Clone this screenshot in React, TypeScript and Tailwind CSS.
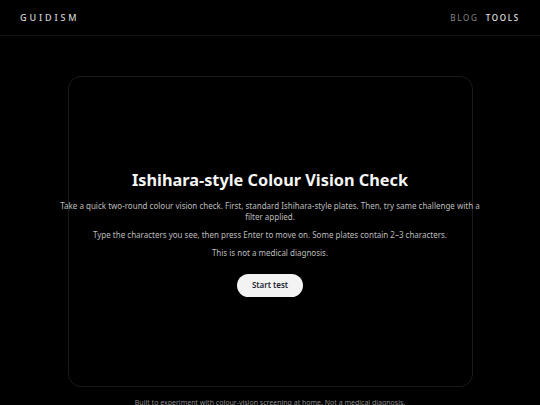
import React from 'react';

export default function App() {
  return (
    <div
      className="min-h-screen bg-black text-white flex flex-col"
      style={{ fontFamily: '"Noto Sans", "Open Sans", sans-serif' }}
    >
      <header className="h-[36px] flex items-center justify-between px-[20px] border-b border-[#141414]">
        <div className="text-[9px] tracking-[0.32em] text-[#d4d4d4] font-medium">GUIDISM</div>
        <nav className="flex gap-[7px] text-[8px] tracking-[0.22em]">
          <a className="text-[#8a8a8a]">BLOG</a>
          <a className="text-[#e5e5e5] font-medium">TOOLS</a>
        </nav>
      </header>

      <main className="flex flex-col items-center pt-[40px]">
        <section className="w-[405px] h-[311px] rounded-[13px] border border-[#1a1a1a] bg-black flex flex-col items-center justify-center pt-[6px]">
          <h1 className="text-[16.3px] font-bold text-[#f5f5f5] leading-none mb-[11px]">
            Ishihara-style Colour Vision Check
          </h1>
          <div className="w-[424px] shrink-0 flex flex-col items-center gap-[7px] text-[8px] leading-[11px] text-[#bdbdbd] text-center">
            <p>
              Take a quick two-round colour vision check. First, standard Ishihara-style plates. Then, try same challenge with a filter applied.
            </p>
            <p>Type the characters you see, then press Enter to move on. Some plates contain 2–3 characters.</p>
            <p>This is not a medical diagnosis.</p>
          </div>
          <button className="mt-[16px] h-[23px] px-[15px] rounded-full bg-[#f3f3f3] text-[#1e2430] text-[8px] font-semibold">
            Start test
          </button>
        </section>
        <footer className="mt-[11px] text-[7px] text-[#8a8a8a] whitespace-nowrap">
          Built to experiment with colour-vision screening at home. Not a medical diagnosis.
        </footer>
      </main>
    </div>
  );
}
